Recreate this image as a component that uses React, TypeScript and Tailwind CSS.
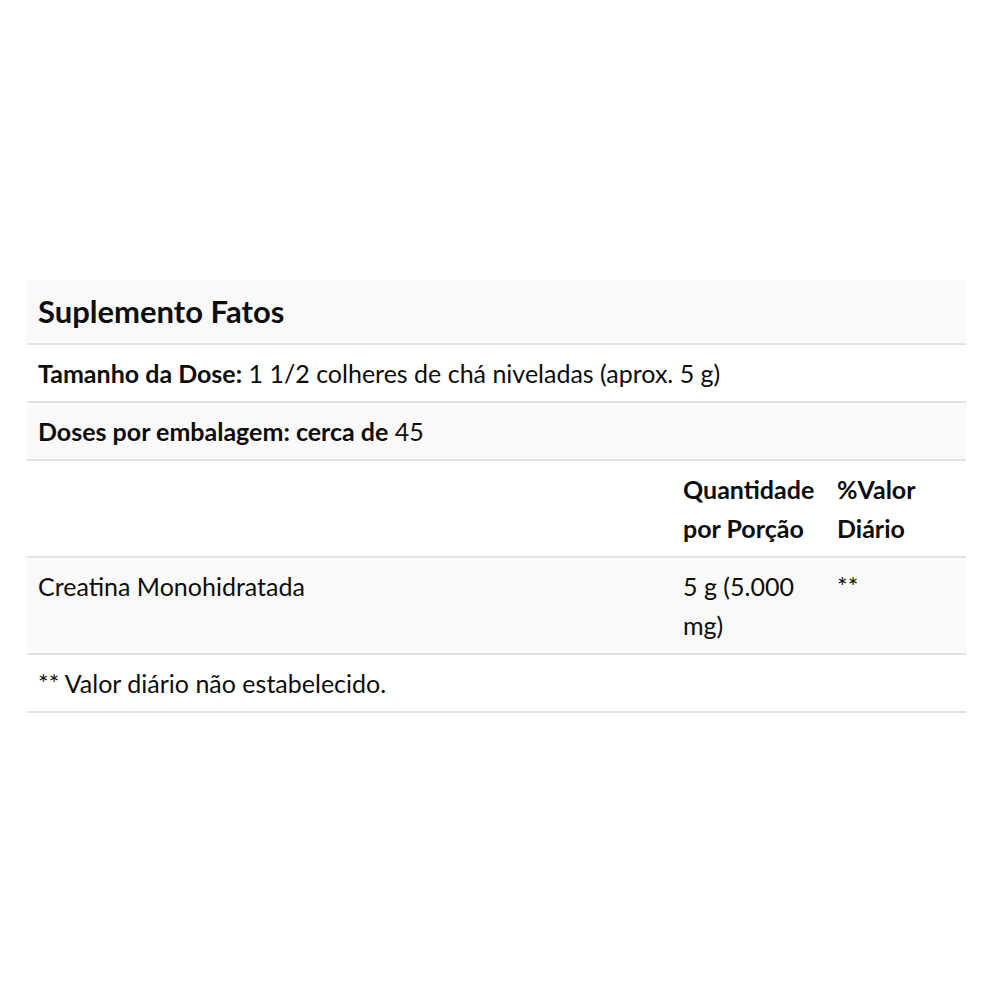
const cell = "px-[11px] pt-[9px] pb-[8px] align-top leading-[39px]"

function App() {
  return (
    <div className="flex h-[1000px] w-[1000px] flex-col bg-white pt-[280px] pl-[27px] font-['Lato',sans-serif] text-[25px] text-[#0d0d0d]">
      <table className="w-[939px] table-fixed border-collapse">
        <colgroup>
          <col className="w-[645px]" />
          <col className="w-[154px]" />
          <col className="w-[140px]" />
        </colgroup>
        <tbody>
          <tr className="border-b-2 border-[#e3e3e3] bg-[#f9f9f9]">
            <td colSpan={3} className="px-[11px] py-[10px] text-[31px] font-bold leading-[43px]">
              Suplemento Fatos
            </td>
          </tr>
          <tr className="border-b-2 border-[#e3e3e3]">
            <td colSpan={3} className={cell}>
              <span className="font-bold">Tamanho da Dose:</span> 1 1/2 colheres de chá niveladas (aprox. 5 g)
            </td>
          </tr>
          <tr className="border-b-2 border-[#e3e3e3] bg-[#f9f9f9]">
            <td colSpan={3} className={cell}>
              <span className="font-bold">Doses por embalagem: cerca de</span> 45
            </td>
          </tr>
          <tr className="border-b-2 border-[#e3e3e3]">
            <td className={cell}></td>
            <td className={cell + " font-bold"}>Quantidade por Porção</td>
            <td className={cell + " font-bold"}>%Valor Diário</td>
          </tr>
          <tr className="border-b-2 border-[#e3e3e3] bg-[#f9f9f9]">
            <td className={cell}>Creatina Monohidratada</td>
            <td className={cell}>5 g (5.000 mg)</td>
            <td className={cell}>**</td>
          </tr>
          <tr className="border-b-2 border-[#e3e3e3]">
            <td colSpan={3} className={cell}>
              ** Valor diário não estabelecido.
            </td>
          </tr>
        </tbody>
      </table>
    </div>
  )
}

export default App
